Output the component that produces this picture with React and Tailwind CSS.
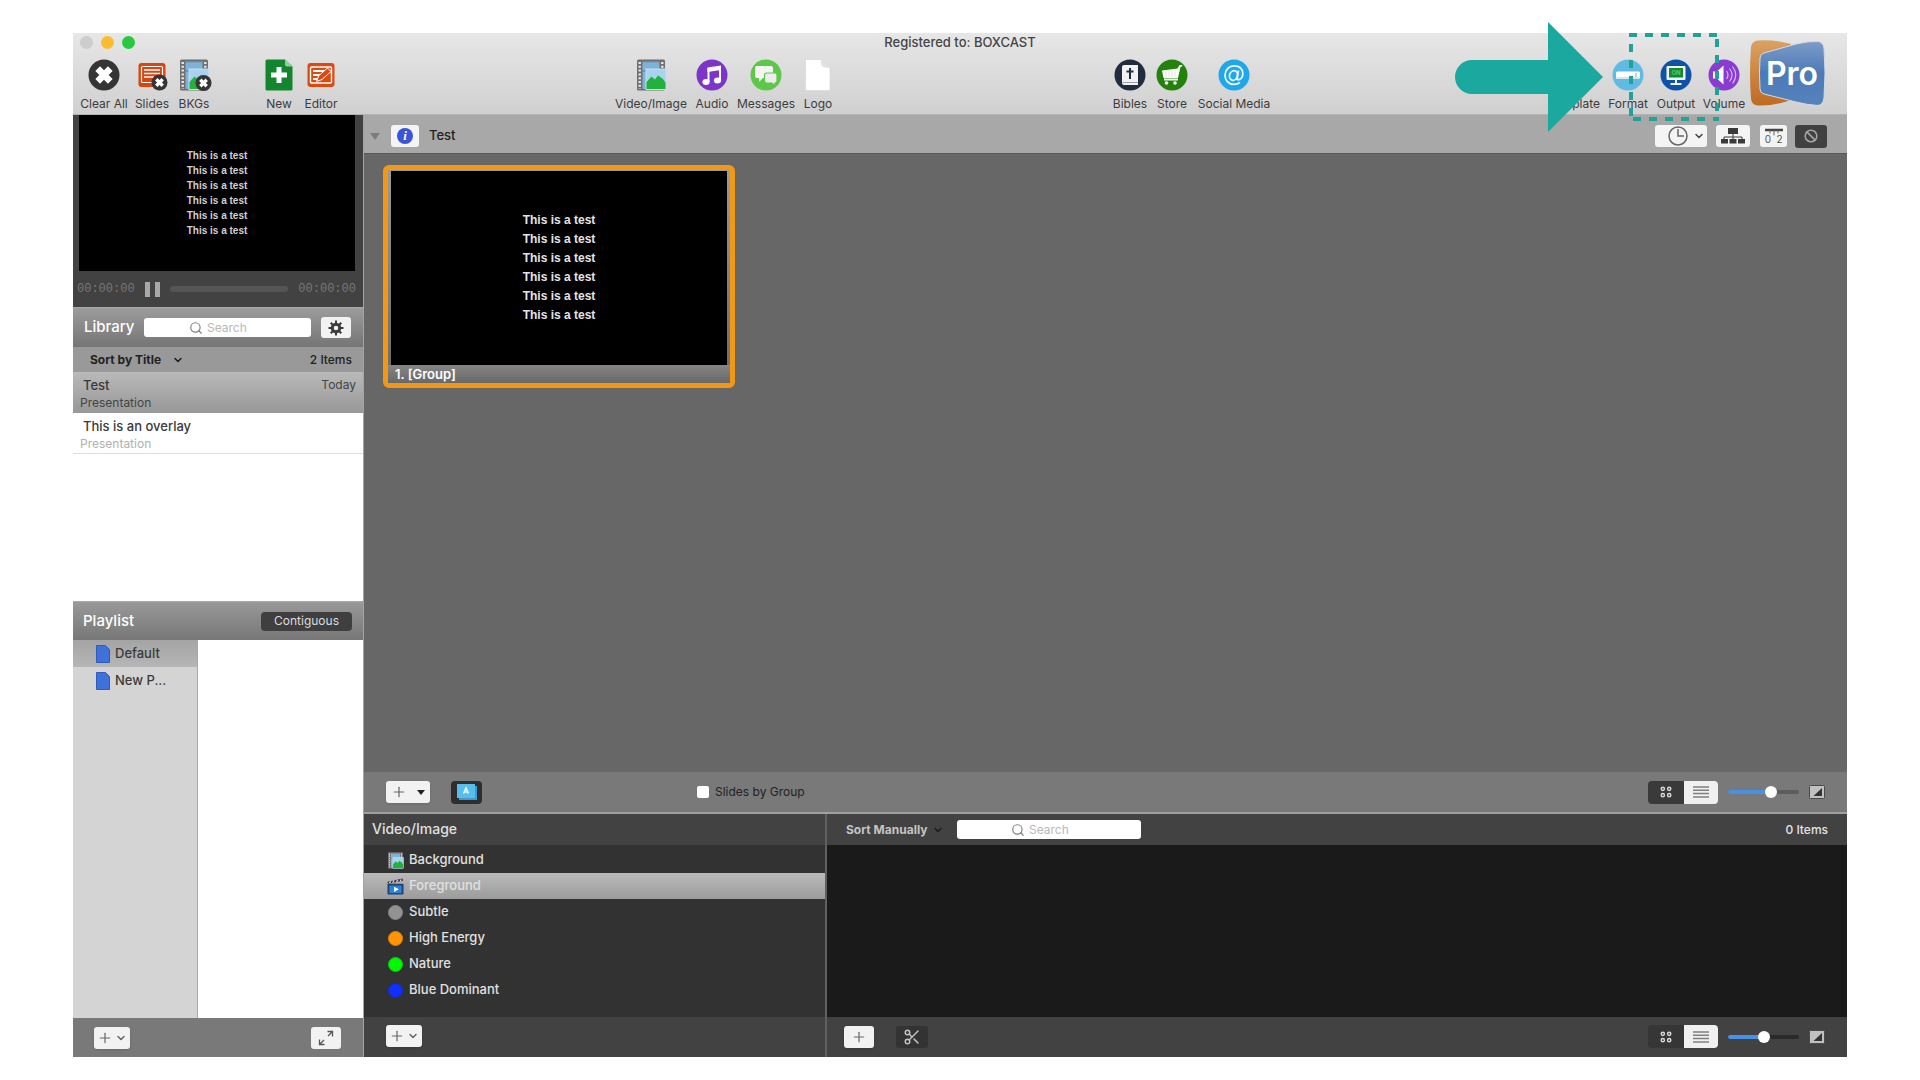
import { useState } from 'react';
import { ChevronDown, Search, Plus, Ban, Scissors } from 'lucide-react';

const clearTools = [
  { label: 'Clear All', icon: ClearAllIcon, width: 'w-12' },
  { label: 'Slides', icon: SlidesIcon, width: 'w-12' },
  { label: 'BKGs', icon: BackgroundsIcon, width: 'w-9' },
];

const editTools = [
  { label: 'New', icon: NewIcon, width: 'w-10' },
  { label: 'Editor', icon: EditorIcon, width: 'w-11' },
];

const mediaTools = [
  { label: 'Video/Image', icon: FilmIcon, width: 'w-[74px]' },
  { label: 'Audio', icon: AudioIcon, width: 'w-12' },
  { label: 'Messages', icon: MessagesIcon, width: 'w-15' },
  { label: 'Logo', icon: LogoIcon, width: 'w-11' },
];

const webTools = [
  { label: 'Bibles', icon: BibleIcon, width: 'w-11' },
  { label: 'Store', icon: StoreIcon, width: 'w-10' },
  { label: 'Social Media', icon: SocialIcon, width: 'w-21' },
];

const outputTools = [
  { label: 'Template', icon: TemplateIcon, width: 'w-15' },
  { label: 'Format', icon: FormatIcon, width: 'w-12' },
  { label: 'Output', icon: OutputIcon, width: 'w-12' },
  { label: 'Volume', icon: VolumeIcon, width: 'w-12' },
];

const libraryItems = [
  { id: 1, title: 'Test', kind: 'Presentation', date: 'Today' },
  { id: 2, title: 'This is an overlay', kind: 'Presentation', date: '' },
];

const playlists = ['Default', 'New P...'];

const mediaFolders = [
  { name: 'Background', icon: <FilmIcon className="w-[17px] h-[17px]" /> },
  { name: 'Foreground', icon: <ClapperIcon /> },
  { name: 'Subtle', icon: <Dot className="bg-[#929292] border-[#858585]" /> },
  { name: 'High Energy', icon: <Dot className="bg-[#ff9500] border-[#e08000]" /> },
  { name: 'Nature', icon: <Dot className="bg-[#00f900] border-[#00cc10]" /> },
  { name: 'Blue Dominant', icon: <Dot className="bg-[#0f30ff] border-[#1228cc]" /> },
];

const slideLines = Array(6).fill('This is a test');

/* Icons */

function Cross({ cx, cy, r }) {
  return (
    <path
      d={`M${cx - r} ${cy - r}L${cx + r} ${cy + r}M${cx + r} ${cy - r}L${cx - r} ${cy + r}`}
      stroke="#fff"
      strokeWidth={r * 1.05}
    />
  );
}

function ClearAllIcon() {
  return (
    <svg viewBox="0 0 32 32" className="w-8 h-8">
      <circle cx="16" cy="16" r="15.5" fill="#353535" />
      <Cross cx={16} cy={16} r={6.3} />
    </svg>
  );
}

function SlidesIcon() {
  return (
    <svg viewBox="0 0 32 32" className="w-8 h-8">
      <rect x="2.5" y="4" width="27" height="24" rx="3" fill="#d9440f" />
      <rect x="5.5" y="7.5" width="21" height="16" rx="1" fill="none" stroke="#fff" strokeWidth="1.2" />
      <path d="M8 11h16M8 14.5h16M8 18h10" stroke="#fff" strokeWidth="1.6" />
      <circle cx="23.5" cy="23.5" r="8" fill="#353535" />
      <Cross cx={23.5} cy={23.5} r={3.2} />
    </svg>
  );
}

function FilmArt() {
  return (
    <>
      <rect x="2" y="0.5" width="28" height="31" rx="1.5" fill="#6f6f6f" />
      <rect x="7.5" y="2" width="17" height="28" fill="#7fb2d6" />
      <path d="M7.5 12h17M7.5 2.8h17" stroke="#4b7fa8" strokeWidth="1" />
      <path d="M4.7 3v27M27.3 3v8" stroke="#e8e8e8" strokeWidth="2.4" strokeDasharray="2 1.8" />
      <rect x="11" y="10" width="20" height="20.5" fill="#a9d2ef" stroke="#c8dfee" strokeWidth="1" />
      <path d="M11.5 30v-7l5-5.5 3.500 3 3-4 4.500 3 3 4V30z" fill="#22b23c" />
    </>
  );
}

function FilmIcon({ className = 'w-8 h-8' }) {
  return (
    <svg viewBox="0 0 32 32" className={className}>
      <FilmArt />
    </svg>
  );
}

function BackgroundsIcon() {
  return (
    <svg viewBox="0 0 32 32" className="w-8 h-8 overflow-visible">
      <FilmArt />
      <circle cx="25.5" cy="24" r="8" fill="#353535" />
      <Cross cx={25.5} cy={24} r={3.2} />
    </svg>
  );
}

function NewIcon() {
  return (
    <svg viewBox="0 0 32 32" className="w-8 h-8">
      <path d="M4 .5h18l7.500 7V30a1.500 1.500 0 0 1-1.500 1.500H4A1.500 1.500 0 0 1 2.500 30V2A1.500 1.500 0 0 1 4 .5z" fill="#12862f" />
      <path d="M22 .5l7.500 7H24a2 2 0 0 1-2-2z" fill="#8fcf9d" />
      <path d="M16 8v16M8 16h16" stroke="#fff" strokeWidth="5" />
    </svg>
  );
}

function EditorIcon() {
  return (
    <svg viewBox="0 0 32 32" className="w-8 h-8">
      <rect x="2.5" y="4" width="27" height="24" rx="3" fill="#dc4a14" />
      <rect x="5.5" y="8" width="21" height="16" rx="1" fill="none" stroke="#fff" strokeWidth="1.4" />
      <path d="M8 12h12M8 16h8M8 20h4" stroke="#fff" strokeWidth="1.8" />
      <path d="M11.5 22.500l2-5.500L22.500 9l3.500 3.500-9 8z" fill="#dc4a14" stroke="#fff" strokeWidth="1" />
    </svg>
  );
}

function AudioIcon() {
  return (
    <svg viewBox="0 0 32 32" className="w-8 h-8">
      <circle cx="16" cy="16" r="15.5" fill="#7d35c9" />
      <path d="M11.5 8.500L25 6.500v4.500l-13.500 2z" fill="#fff" />
      <path d="M12.5 9v14M24 7.500V21" stroke="#fff" strokeWidth="2" />
      <ellipse cx="10" cy="23" rx="3.6" ry="2.9" fill="#fff" />
      <ellipse cx="21.5" cy="21.5" rx="3.6" ry="2.9" fill="#fff" />
    </svg>
  );
}

function MessagesIcon() {
  return (
    <svg viewBox="0 0 32 32" className="w-8 h-8">
      <circle cx="16" cy="16" r="15.5" fill="#5cc749" />
      <path d="M7 7h14a2 2 0 0 1 2 2v8a2 2 0 0 1-2 2h-8l-4 4v-4H7a2 2 0 0 1-2-2V9a2 2 0 0 1 2-2z" fill="#f4f4f4" />
      <path d="M16.5 14H25a2 2 0 0 1 2 2v6a2 2 0 0 1-2 2v3l-3-3h-5.500a2 2 0 0 1-2-2v-6a2 2 0 0 1 2-2z" fill="#ececec" stroke="#5cc749" strokeWidth="1.2" />
    </svg>
  );
}

function LogoIcon() {
  return (
    <svg viewBox="0 0 32 32" className="w-8 h-8">
      <path d="M4.5.5H19L28 9v21.500a1 1 0 0 1-1 1H4.500a1 1 0 0 1-1-1v-29a1 1 0 0 1 1-1z" fill="#fff" stroke="#d4d4d4" strokeWidth=".6" />
      <path d="M19 .5c-.5 4 0 6 2 7.500 2 1 4 .5 7 1z" fill="#e2e2e2" />
    </svg>
  );
}

function BibleIcon() {
  return (
    <svg viewBox="0 0 32 32" className="w-8 h-8">
      <circle cx="16" cy="16" r="15.5" fill="#1f2d3f" />
      <path d="M10 6h14v20H10a2 2 0 0 1-2-2V8a2 2 0 0 1 2-2z" fill="#f2f2f2" />
      <path d="M8.5 23.500H24" stroke="#9aa1a9" strokeWidth="1" />
      <path d="M16 9v11M12.500 12.500h7" stroke="#1f2d3f" strokeWidth="2" />
    </svg>
  );
}

function StoreIcon() {
  return (
    <svg viewBox="0 0 32 32" className="w-8 h-8">
      <circle cx="16" cy="16" r="15.5" fill="#23820c" />
      <path d="M6 11.500l15.500-2 2-3.500h3l-.5 1.500-1.500.5-2.500 11H7.500z" fill="#fff" />
      <path d="M8 20.500h14" stroke="#fff" strokeWidth="2" />
      <circle cx="10.5" cy="24" r="1.8" fill="#fff" />
      <circle cx="19" cy="24" r="1.8" fill="#fff" />
      <path d="M10 13v5M13 12.500V18M16 12v6M19 12v6" stroke="#c8e2c2" strokeWidth=".7" />
    </svg>
  );
}

function SocialIcon() {
  return (
    <svg viewBox="0 0 32 32" className="w-8 h-8" fill="none" stroke="#e8f6ff" strokeWidth="1.8">
      <circle cx="16" cy="16" r="15.5" fill="#1fa7ea" stroke="none" />
      <ellipse cx="15.5" cy="16.5" rx="4" ry="4.8" transform="rotate(18 15.5 16.5)" />
      <path d="M20.5 11.500l-1.500 8c-.4 2.500 5.800 1.500 5.800-5C24.800 9.500 21 6.800 16.500 6.800 10.800 6.800 7 11 7 16.300 7 21.500 10.500 25.300 16 25.300c2.500 0 4.300-.6 6-1.700" />
    </svg>
  );
}

function TemplateIcon() {
  return (
    <svg viewBox="0 0 32 32" className="w-8 h-8">
      <circle cx="16" cy="16" r="15.5" fill="#1aa89f" />
    </svg>
  );
}

function FormatIcon() {
  return (
    <svg viewBox="0 0 32 32" className="w-8 h-8">
      <circle cx="16" cy="16" r="15.5" fill="#5fbbe2" />
      <rect x="4" y="12.5" width="24" height="7.5" rx="1.5" fill="#fff" />
      <path d="M5 19h22" stroke="#c4dfea" strokeWidth="1.5" />
      <path d="M24 14v4" stroke="#8cb6c8" strokeWidth="1.2" />
    </svg>
  );
}

function OutputIcon() {
  return (
    <svg viewBox="0 0 32 32" className="w-8 h-8">
      <circle cx="16" cy="16" r="15.5" fill="#0f52a8" />
      <rect x="6.5" y="7" width="19" height="14" rx="1" fill="#eef3f8" />
      <rect x="9" y="9" width="14" height="9.5" fill="#128a2c" />
      <text x="16" y="16" textAnchor="middle" fontSize="6" fontWeight="700" fill="#5cc870">ON</text>
      <path d="M16 21v3.500M10.500 25h11" stroke="#eef3f8" strokeWidth="2" />
    </svg>
  );
}

function VolumeIcon() {
  return (
    <svg viewBox="0 0 32 32" className="w-8 h-8">
      <circle cx="16" cy="16" r="15.5" fill="#8a3bd0" />
      <path d="M5 12.500h4l6.500-6v19l-6.500-6H5z" fill="#fff" />
      <path d="M18.5 12q3 4 0 8M21.500 9.500q5 6.500 0 13M24.500 7.500q6.500 8.500 0 17" fill="none" stroke="#d9b8f3" strokeWidth="1.2" />
    </svg>
  );
}

function ProLogo() {
  return (
    <svg viewBox="0 0 75 66" className="w-[75px] h-[66px]">
      <defs>
        <linearGradient id="proOrange" x1="0" y1="0" x2="0" y2="1">
          <stop offset="0" stopColor="#d9a263" />
          <stop offset="1" stopColor="#bf6a22" />
        </linearGradient>
        <linearGradient id="proBlue" x1="0" y1="0" x2="0" y2="1">
          <stop offset="0" stopColor="#7d9cc8" />
          <stop offset="0.5" stopColor="#4c7ab8" />
          <stop offset="1" stopColor="#5783bb" />
        </linearGradient>
      </defs>
      <path d="M8 .5Q22-1 41 4V60Q24 66 8 65.500 2 65 1 59-1 33 1 7 2 1 8 .5z" fill="url(#proOrange)" />
      <path d="M14 13L46 4Q58 1 68 1.500 73 2 74 8 76 33 74 58 73 65 68 65.500 58 65 46 62L14 54Q10 53 10 49 9 33 10 18 10 14 14 13z" fill="url(#proBlue)" stroke="#d5dbe4" strokeWidth="1" />
      <text x="42" y="45" textAnchor="middle" fontSize="32" fontWeight="600" fill="#fff">Pro</text>
    </svg>
  );
}

function ClapperIcon() {
  return (
    <svg viewBox="0 0 18 18" className="w-[17px] h-[17px]">
      <path d="M.5 4L16.500.5l.5 2.500L1 6z" fill="#333" />
      <path d="M2.5 5.500l1.500-2M6 5l1.500-2.500M10 4l1.500-2M14 3.500l1-2" stroke="#ddd" strokeWidth="1.3" />
      <rect x=".5" y="6" width="17" height="11.5" rx="1" fill="#22426b" />
      <rect x="2.5" y="8" width="13" height="8" fill="#2f80dc" />
      <path d="M7.5 9.200l5 2.800-5 2.800z" fill="#fff" />
    </svg>
  );
}

function Dot({ className }) {
  return <span className={`w-[15px] h-[15px] rounded-full border ${className}`} />;
}

function PageIcon() {
  return (
    <svg viewBox="0 0 14 18" className="w-[14px] h-[18px]">
      <path d="M.5.5h9l4 4v13H.5z" fill="#3f72d8" stroke="#2f5cba" strokeWidth="1" />
    </svg>
  );
}

function GearIcon() {
  return (
    <svg viewBox="0 0 16 16" className="w-4 h-4" fill="none" stroke="#3c3c3c">
      <circle cx="8" cy="8" r="3.8" strokeWidth="3" />
      <path d="M8 .5v3M8 12.500v3M.5 8h3M12.500 8h3M2.700 2.700l2.100 2.100M11.200 11.200l2.100 2.100M13.300 2.700l-2.100 2.100M4.800 11.200l-2.100 2.100" strokeWidth="2" />
    </svg>
  );
}

function SitemapIcon() {
  return (
    <svg viewBox="0 0 26 18" className="w-[26px] h-[18px]" fill="#3a3a3a">
      <rect x="8" y="1" width="10" height="6" />
      <path d="M13 7v5M4 12.500V10h18v2.500" fill="none" stroke="#3a3a3a" strokeWidth="1" />
      <rect x="1" y="12" width="7" height="4.5" />
      <rect x="9.5" y="12" width="7" height="4.5" />
      <rect x="18" y="12" width="7" height="4.5" />
    </svg>
  );
}

function RulerIcon() {
  return (
    <svg viewBox="0 0 20 16" className="w-5 h-4" fill="#555">
      <path d="M1 2h18" stroke="#444" strokeWidth="2.5" />
      <path d="M6 2v3.500M10 2v5.500M14 2v3.500" stroke="#666" strokeWidth="1" />
      <text x="4" y="15" textAnchor="middle" fontSize="10">0</text>
      <text x="15.5" y="15" textAnchor="middle" fontSize="10">2</text>
    </svg>
  );
}

function ExpandIcon() {
  return (
    <svg viewBox="0 0 16 16" className="w-4 h-4" fill="none" stroke="#555" strokeWidth="1.3">
      <path d="M10 6l4.500-4.500M9.500 1.500h5v5M6 10l-4.500 4.500M6.500 14.500h-5v-5" />
    </svg>
  );
}

function ContrastIcon() {
  return (
    <svg viewBox="0 0 16 14" className="w-4 h-3.5 shrink-0">
      <rect x=".5" y=".5" width="15" height="13" rx="1" fill="#c0c0c0" stroke="#4a4a4a" />
      <path d="M13 3v8H4.500z" fill="#333" />
    </svg>
  );
}

/* Shared controls */

function ToolGroup({ tools }) {
  return (
    <div className="flex">
      {tools.map(({ label, icon: Icon, width }) => (
        <button key={label} type="button" className={`flex flex-col items-center ${width}`}>
          <Icon />
          <span className="mt-[5px] text-[12px] leading-4 whitespace-nowrap text-[#3c3c3c]">{label}</span>
        </button>
      ))}
    </div>
  );
}

function SearchBox({ label, className }) {
  return (
    <label className={`flex items-center gap-1 h-[19px] bg-white rounded-[3px] ${className}`}>
      <Search className="w-3.5 h-3.5 shrink-0 text-[#808080]" strokeWidth={2} />
      <input
        type="text"
        aria-label={label}
        placeholder="Search"
        className="flex-1 min-w-0 text-[12px] leading-4 text-gray-800 placeholder:text-[#b8b8b8] outline-none"
      />
    </label>
  );
}

function SortSelect({ label, value, className }) {
  return (
    <label className={`flex items-center ${className}`}>
      <select aria-label={label} className="appearance-none bg-transparent text-[12px] leading-4 font-bold outline-none">
        <option>{value}</option>
      </select>
      <ChevronDown className="w-3 h-3 text-[#1c1c1c]" strokeWidth={3} />
    </label>
  );
}

function AddButton({ className, children }) {
  return (
    <button type="button" aria-label="Add" className={`flex items-center justify-center h-[22px] rounded-[3px] bg-[#f2f2f2] shadow-sm text-[#666] ${className}`}>
      <Plus className="w-4 h-4" strokeWidth={1.8} />
      {children}
    </button>
  );
}

function ViewControls({ name, value, dark }) {
  const [size, setSize] = useState(value);

  return (
    <div className="flex items-center">
      <div className="flex h-[23px] rounded-[4px] overflow-hidden">
        <button type="button" aria-label="Grid view" className={`w-9 flex items-center justify-center ${dark ? 'bg-[#363636]' : 'bg-[#3a3a3a]'}`}>
          <svg viewBox="0 0 12 12" className="w-3 h-3" fill="none" stroke="#d8d8d8" strokeWidth="1.5">
            <circle cx="2.8" cy="2.8" r="1.6" />
            <circle cx="9.2" cy="2.8" r="1.6" />
            <circle cx="2.8" cy="9.2" r="1.6" />
            <circle cx="9.2" cy="9.2" r="1.6" />
          </svg>
        </button>
        <button type="button" aria-label="List view" className="w-[34px] flex items-center justify-center bg-[#f0f0f0]">
          <svg viewBox="0 0 16 12" className="w-4 h-3" stroke="#808080" strokeWidth="1.5">
            <path d="M0 1h16M0 4.300h16M0 7.600h16M0 11h16" />
          </svg>
        </button>
      </div>
      <div className="relative ml-2.5 mr-2.5 w-[71px] h-4 flex items-center">
        <div className={`w-full h-1 rounded-full overflow-hidden ${dark ? 'bg-[#2a2a2a]' : 'bg-[#5c5c5c]'}`}>
          <div className="h-full bg-[#4792e6]" style={{ width: `${size}%` }} />
        </div>
        <input
          type="range"
          aria-label={name}
          min="0"
          max="100"
          value={size}
          onChange={(e) => setSize(Number(e.target.value))}
          className="absolute inset-0 w-full h-4 appearance-none bg-transparent [&::-webkit-slider-thumb]:appearance-none [&::-webkit-slider-thumb]:w-3 [&::-webkit-slider-thumb]:h-3 [&::-webkit-slider-thumb]:rounded-full [&::-webkit-slider-thumb]:bg-white"
        />
      </div>
      <ContrastIcon />
    </div>
  );
}

/* Panels */

function Toolbar() {
  return (
    <header className="h-[82px] bg-linear-to-b from-[#e7e7e7] to-[#d0d0d0] border-b border-[#b4b4b4]">
      <div className="relative h-[18px] flex items-center justify-center">
        <div className="absolute left-[7px] flex gap-2">
          <span className="w-[13px] h-[13px] rounded-full bg-[#cdcdcd]" />
          <span className="w-[13px] h-[13px] rounded-full bg-[#fdbc2e]" />
          <span className="w-[13px] h-[13px] rounded-full bg-[#28c840]" />
        </div>
        <h1 className="text-[13px] leading-4 font-medium text-[#444]">Registered to: BOXCAST</h1>
      </div>
      <div className="flex justify-between items-start pl-[7px] pr-[22px] pt-2">
        <div className="flex gap-[47px] pr-[3px]">
          <ToolGroup tools={clearTools} />
          <ToolGroup tools={editTools} />
        </div>
        <ToolGroup tools={mediaTools} />
        <ToolGroup tools={webTools} />
        <div className="flex gap-0.5">
          <ToolGroup tools={outputTools} />
          <div className="-mt-[19px]">
            <ProLogo />
          </div>
        </div>
      </div>
    </header>
  );
}

function Preview() {
  return (
    <section className="bg-[#424242]">
      <div className="ml-1.5 mr-2 h-[156px] bg-black flex flex-col items-center justify-center font-['Liberation_Sans',Arial,sans-serif] font-bold text-[10px] leading-[15px] text-[#d0d0d0]">
        {slideLines.map((line, i) => (
          <p key={i}>{line}</p>
        ))}
      </div>
      <div className="h-9 pl-1 pr-[7px] flex items-center justify-between font-['Liberation_Mono',monospace] text-[12px] text-[#777]">
        <span>00:00:00</span>
        <button type="button" aria-label="Pause" className="flex gap-[5px]">
          <span className="w-[5px] h-[15px] bg-[#a8a8a8]" />
          <span className="w-[5px] h-[15px] bg-[#a8a8a8]" />
        </button>
        <div className="w-[118px] h-1.5 rounded-full bg-[#555]" />
        <span>00:00:00</span>
      </div>
    </section>
  );
}

function Library() {
  const [selected, setSelected] = useState(1);

  return (
    <section className="flex-1 flex flex-col bg-white">
      <div className="h-10 pl-[11px] pr-3 flex items-center bg-linear-to-b from-[#9c9c9c] to-[#757575] border-t border-[#a8a8a8]">
        <h2 className="w-[60px] text-[15px] font-medium text-white">Library</h2>
        <SearchBox label="Search library" className="w-[167px] pl-[45px]" />
        <button type="button" aria-label="Library settings" className="ml-2.5 w-[30px] h-[21px] rounded-[3px] bg-[#f2f2f2] flex items-center justify-center">
          <GearIcon />
        </button>
      </div>
      <div className="h-[25px] pl-[17px] pr-[11px] flex items-center justify-between bg-[#999] text-[#222]">
        <SortSelect label="Sort library" value="Sort by Title" className="gap-2.5" />
        <span className="text-[12px] font-medium">2 Items</span>
      </div>
      <ul>
        {libraryItems.map(item => (
          <li key={item.id}>
            <button
              type="button"
              onClick={() => setSelected(item.id)}
              className={`block w-full h-[41px] pt-[3px] pr-[7px] text-left border-b ${
                selected === item.id
                  ? 'bg-linear-to-b from-[#bababa] to-[#989898] border-[#989898] text-[#444]'
                  : 'bg-white border-[#dcdcdc] text-[#b0b0b0]'
              }`}
            >
              <span className="flex justify-between pl-2.5">
                <span className="text-[13px] leading-[18px] font-medium text-[#3a3a3a]">{item.title}</span>
                <span className="text-[12px] leading-[18px]">{item.date}</span>
              </span>
              <span className="block pl-[7px] text-[12px] leading-[17px]">{item.kind}</span>
            </button>
          </li>
        ))}
      </ul>
    </section>
  );
}

function Playlist() {
  const [active, setActive] = useState('Default');

  return (
    <section>
      <div className="h-[39px] pl-2.5 pr-[11px] flex items-center justify-between bg-linear-to-b from-[#999] to-[#777] border-t border-[#aaa]">
        <h2 className="text-[15px] font-medium text-white">Playlist</h2>
        <button type="button" className="w-[91px] h-[19px] rounded-[4px] bg-[#3f3f3f] text-[12px] leading-4 text-[#dcdcdc]">
          Contiguous
        </button>
      </div>
      <div className="flex h-[378px] bg-white">
        <ul className="w-[125px] bg-[#d4d4d4] border-r border-[#a8a8a8]">
          {playlists.map(name => (
            <li key={name}>
              <button
                type="button"
                onClick={() => setActive(name)}
                className={`w-full h-[27px] pl-[23px] flex items-center gap-[5px] text-[13px] font-medium text-[#3a3a3a] ${
                  active === name ? 'bg-linear-to-b from-[#a4a4a4] to-[#b6b6b6]' : ''
                }`}
              >
                <PageIcon />
                {name}
              </button>
            </li>
          ))}
        </ul>
      </div>
      <div className="h-[39px] pl-[21px] pr-[22px] flex items-center justify-between bg-[#797979]">
        <AddButton className="w-9 gap-0.5">
          <ChevronDown className="w-3 h-3" strokeWidth={3} />
        </AddButton>
        <button type="button" aria-label="Expand playlist" className="w-[30px] h-[22px] rounded-[3px] bg-[#f2f2f2] flex items-center justify-center">
          <ExpandIcon />
        </button>
      </div>
    </section>
  );
}

function Presentation() {
  return (
    <section className="flex-1 flex flex-col">
      <div className="h-[39px] pl-1.5 pr-5 pt-1 flex items-center justify-between bg-[#a8a8a8] border-b border-[#585858]">
        <div className="flex items-center">
          <button type="button" aria-label="Collapse" className="border-x-[5px] border-x-transparent border-t-[7px] border-t-[#7c7c7c]" />
          <button type="button" aria-label="Info" className="ml-[11px] w-7 h-[22px] rounded-[3px] bg-[#f4f4f4] flex items-center justify-center">
            <span className="w-4 h-4 rounded-full bg-[#3b53d6] text-white text-[13px] leading-4 font-bold italic font-['Liberation_Serif',serif]">i</span>
          </button>
          <h2 className="ml-2.5 text-[13px] font-medium text-[#222]">Test</h2>
        </div>
        <div className="flex items-center">
          <button type="button" aria-label="Timeline" className="w-[52px] h-[22px] rounded-[3px] bg-[#f4f4f4] flex items-center justify-end gap-[5px] pr-0.5">
            <svg viewBox="0 0 20 20" className="w-5 h-5" fill="none" stroke="#666" strokeWidth="1.5">
              <circle cx="10" cy="10" r="9" />
              <path d="M10 3v7h6" />
            </svg>
            <ChevronDown className="w-3 h-3 text-[#444]" strokeWidth={3} />
          </button>
          <button type="button" aria-label="Arrangement" className="ml-[9px] w-[34px] h-[22px] rounded-[3px] bg-[#f4f4f4] flex items-center justify-center">
            <SitemapIcon />
          </button>
          <button type="button" aria-label="Ruler" className="ml-2.5 w-[27px] h-[22px] rounded-[3px] bg-[#f4f4f4] flex items-center justify-center">
            <RulerIcon />
          </button>
          <button type="button" aria-label="Disable" className="ml-2 w-8 h-[23px] rounded-[3px] bg-[#404040] flex items-center justify-center">
            <Ban className="w-3.5 h-3.5 text-[#a4a4a4]" strokeWidth={2.6} />
          </button>
        </div>
      </div>

      <div className="flex-1 pl-[19px] pt-[11px] bg-[#676767]">
        <figure className="w-[352px] rounded-[6px] border-[5px] border-[#f39816] bg-linear-to-b from-[#9a9a9a] to-[#6a6a6a] pt-px">
          <div className="mx-[3px] h-[194px] bg-black flex flex-col items-center justify-center font-['Liberation_Sans',Arial,sans-serif] font-bold text-[12px] leading-[19px] text-[#e4e4e4]">
            {slideLines.map((line, i) => (
              <p key={i}>{line}</p>
            ))}
          </div>
          <figcaption className="h-[18px] pl-[7px] text-[13px] leading-[18px] font-semibold text-white bg-linear-to-b from-[#868686] to-[#686868]">
            1. [Group]
          </figcaption>
        </figure>
      </div>

      <div className="h-[42px] pl-[22px] pr-[22px] flex items-center bg-[#797979] border-b-2 border-[#a0a0a0]">
        <AddButton className="w-11 gap-2.5">
          <span className="border-x-4 border-x-transparent border-t-[5px] border-t-[#222]" />
        </AddButton>
        <button type="button" aria-label="Slide labels" className="ml-[21px] w-[31px] h-[23px] rounded-[4px] bg-[#2e2e2e] flex items-center justify-center">
          <svg viewBox="0 0 22 16" className="w-[22px] h-4">
            <rect x="3" y="2" width="18" height="14" fill="#3c9bd0" />
            <rect x="1" y="0" width="18" height="14" fill="#57bdec" />
            <path d="M7.5 9.500L10 4l2.500 5.500M8.500 8h3" fill="none" stroke="#e4f6ff" strokeWidth="1.6" />
          </svg>
        </button>
        <label className="ml-[215px] flex items-center gap-1.5 text-[12px] text-[#222]">
          <input type="checkbox" className="appearance-none w-3 h-3 rounded-[2px] bg-white checked:bg-[#4792e6]" />
          Slides by Group
        </label>
        <div className="ml-auto">
          <ViewControls name="Slide size" value={63} />
        </div>
      </div>
    </section>
  );
}

function MediaBin() {
  const [folder, setFolder] = useState('Foreground');

  return (
    <section className="flex">
      <div className="w-[463px] shrink-0 flex flex-col bg-[#323232] border-r-2 border-[#606060] text-[#e0e0e0]">
        <h2 className="h-[31px] pl-2 bg-[#424242] text-[14px] leading-[30px] font-medium">Video/Image</h2>
        <ul className="flex-1 pt-0.5">
          {mediaFolders.map(({ name, icon }) => (
            <li key={name}>
              <button
                type="button"
                onClick={() => setFolder(name)}
                className={`w-full h-[26px] pl-[23px] flex items-center gap-[5px] text-[13px] font-medium ${
                  folder === name ? 'bg-linear-to-b from-[#bababa] to-[#9c9c9c]' : ''
                }`}
              >
                <span className="w-[17px] flex justify-center">{icon}</span>
                {name}
              </button>
            </li>
          ))}
        </ul>
        <div className="h-10 pl-[22px] pb-0.5 flex items-center bg-[#424242]">
          <AddButton className="w-9 gap-0.5">
            <ChevronDown className="w-3 h-3" strokeWidth={3} />
          </AddButton>
        </div>
      </div>

      <div className="flex-1 flex flex-col">
        <div className="h-[31px] pl-[19px] pr-[19px] flex items-center bg-[#424242]">
          <SortSelect label="Sort media" value="Sort Manually" className="gap-1 text-[#c4c4c4]" />
          <SearchBox label="Search media" className="ml-[13px] w-[184px] pl-[54px]" />
          <span className="ml-auto text-[12px] font-medium text-[#e4e4e4]">0 Items</span>
        </div>
        <div className="flex-1 min-h-[172px] bg-[#1a1a1a]" />
        <div className="h-10 pl-[17px] pr-[22px] pb-px flex items-center bg-[#424242]">
          <AddButton className="w-[30px]" />
          <button type="button" aria-label="Cut" className="ml-[22px] w-8 h-[22px] rounded-[3px] bg-[#333] flex items-center justify-center">
            <Scissors className="w-[18px] h-[18px] text-[#c0c0c0]" />
          </button>
          <div className="ml-auto">
            <ViewControls name="Media size" value={50} dark />
          </div>
        </div>
      </div>
    </section>
  );
}

/* Arrow and dashed frame that point at the Output button */
function Callout() {
  return (
    <>
      <svg viewBox="0 0 148 110" className="absolute -top-[11px] right-[244px] w-[148px] h-[110px]" fill="#1ba89f">
        <path d="M17 38H93V0L148 55 93 110V72H17a17 17 0 0 1 0-34z" />
      </svg>
      <svg viewBox="0 0 90 88" className="absolute top-0 right-[128px] w-[90px] h-[88px]" stroke="#23a097" strokeWidth="4" strokeDasharray="8 8">
        <path d="M0 2H90" />
        <path d="M88 6V86" />
        <path d="M4 86H90" />
        <path d="M2 11V86" />
      </svg>
    </>
  );
}

function App() {
  return (
    <div className="min-h-screen flex flex-col bg-white px-[73px] pt-[33px] pb-[23px] font-['Inter','Liberation_Sans',sans-serif]">
      <main className="relative flex-1 flex flex-col">
        <Toolbar />
        <div className="flex-1 flex">
          <aside className="w-[291px] shrink-0 flex flex-col border-r border-[#a4a4a4]">
            <Preview />
            <Library />
            <Playlist />
          </aside>
          <div className="flex-1 min-w-0 flex flex-col">
            <Presentation />
            <MediaBin />
          </div>
        </div>
        <Callout />
      </main>
    </div>
  );
}

export default App;
